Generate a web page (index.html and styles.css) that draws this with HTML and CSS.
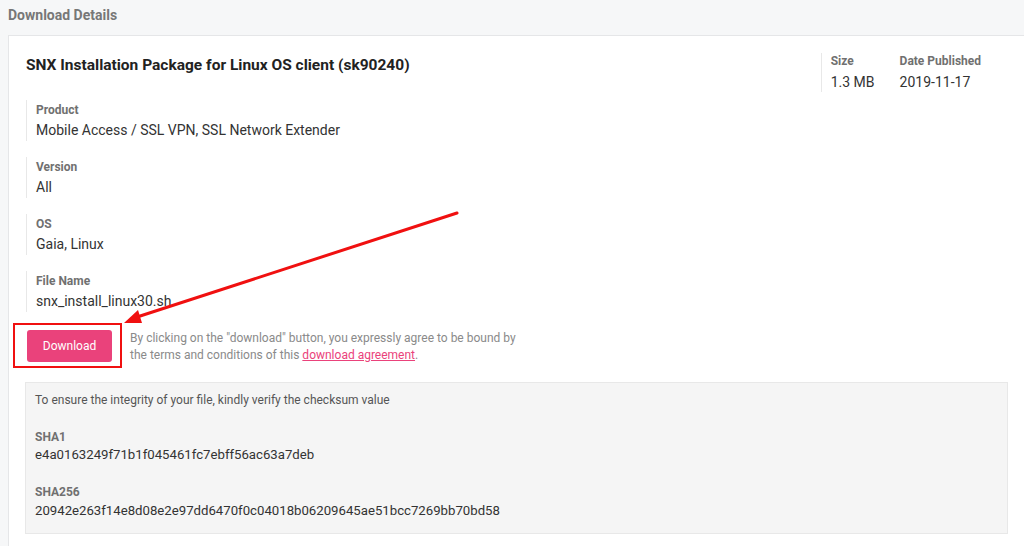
FILE: index.html
```html
<!DOCTYPE html>
<html lang="en">
<head>
    <meta charset="UTF-8">
    <title>Download Details</title>
    <link rel="stylesheet" href="styles.css">
</head>
<body>
    <div class="page-title">Download Details</div>

    <div class="card">
        <div class="card-head">
            <h1>SNX Installation Package for Linux OS client (sk90240)</h1>
            <div class="meta">
                <div class="meta-item">
                    <div class="label">Size</div>
                    <div class="value">1.3 MB</div>
                </div>
                <div class="meta-item">
                    <div class="label">Date Published</div>
                    <div class="value">2019-11-17</div>
                </div>
            </div>
        </div>

        <div class="field">
            <div class="label">Product</div>
            <div class="value">Mobile Access / SSL VPN, SSL Network Extender</div>
        </div>
        <div class="field">
            <div class="label">Version</div>
            <div class="value">All</div>
        </div>
        <div class="field">
            <div class="label">OS</div>
            <div class="value">Gaia, Linux</div>
        </div>
        <div class="field">
            <div class="label">File Name</div>
            <div class="value">snx_install_linux30.sh</div>
        </div>

        <div class="download-row">
            <div class="btn-wrap">
                <a href="#" class="button">Download</a>
            </div>
            <p class="terms">By clicking on the "download" button, you expressly agree to be bound by
                the terms and conditions of this <a href="#">download agreement</a>.</p>
        </div>

        <div class="checksum">
            <p class="note">To ensure the integrity of your file, kindly verify the checksum value</p>
            <div class="label">SHA1</div>
            <div class="value">e4a0163249f71b1f045461fc7ebff56ac63a7deb</div>
            <div class="label sha256">SHA256</div>
            <div class="value">20942e263f14e8d08e2e97dd6470f0c04018b06209645ae51bcc7269bb70bd58</div>
        </div>
    </div>

    <!-- callout arrow pointing to the download button -->
    <svg class="callout" width="1024" height="546" viewBox="0 0 1024 546">
        <line x1="457" y1="213" x2="134" y2="318" stroke="#f01010" stroke-width="3" stroke-linecap="round"/>
        <polygon points="124,323 138,310 142,323" fill="#f01010"/>
    </svg>
</body>
</html>
```

FILE: styles.css
```css
body {
    font-family: Roboto, "Liberation Sans", Arial, sans-serif;
    margin: 0;
    background: #f6f7f8;
    color: #333;
    position: relative;
    height: 546px;
    overflow: hidden;
}
.page-title {
    font-size: 14px;
    font-weight: bold;
    color: #777;
    padding: 7px 8px 0;
    height: 28px;
}
.card {
    margin-left: 8px;
    background: #fff;
    border: 1px solid #e5e6e8;
    border-right: none;
    padding: 17px 16px 20px 17px;
}
.card-head {
    display: flex;
    justify-content: space-between;
    align-items: flex-start;
}
h1 {
    font-size: 15.5px;
    font-weight: bold;
    color: #222;
    margin: 2px 0 0;
    line-height: 20px;
}
.meta {
    display: flex;
    flex-shrink: 0;
    gap: 25px;
    border-left: 1px solid #e8e8e8;
    padding: 0 27px 0 9px;
    white-space: nowrap;
}
.label {
    font-size: 12px;
    font-weight: bold;
    color: #707070;
    line-height: 16px;
}
.value {
    font-size: 14px;
    color: #333;
    line-height: 20px;
    margin-top: 3px;
}
.field {
    border-left: 1px solid #e8e8e8;
    padding: 2px 0 1px 9px;
    margin-top: 16px;
    width: 400px;
}
.field .value {
    margin-top: 2px;
}
.card-head + .field {
    margin-top: 8px;
}
.download-row {
    display: flex;
    align-items: flex-start;
    margin-top: 18px;
}
.btn-wrap {
    border: 2px solid #f01010;
    padding: 5px 8px 4px 12px;
    margin: -7px 8px 0 -13px;
}
.button {
    display: block;
    width: 85px;
    height: 32px;
    line-height: 32px;
    text-align: center;
    background: #ea427b;
    color: #fff;
    border-radius: 3px;
    font-size: 12px;
    text-decoration: none;
}
.terms {
    font-size: 12px;
    color: #8a8a8a;
    line-height: 17px;
    margin: 0;
    width: 396px;
}
.terms a {
    color: #ea427b;
}
.checksum {
    box-sizing: border-box;
    margin: 14px 0 0 -1px;
    width: 983px;
    background: #f5f5f5;
    border: 1px solid #e8e8e8;
    padding: 9px 9px 12px;
}
.checksum .note {
    font-size: 12px;
    color: #555;
    margin: 0 0 21px;
    line-height: 16px;
}
.checksum .value {
    margin-top: 0;
    font-size: 13.2px;
}
.checksum .sha256 {
    margin-top: 19px;
}
.checksum .sha256 + .value {
    margin-top: 1px;
}
.callout {
    position: absolute;
    left: 0;
    top: 0;
    pointer-events: none;
}
```
